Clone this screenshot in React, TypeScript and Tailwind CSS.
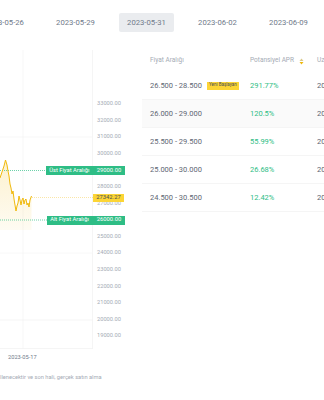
import React from "react";

const tabs = ["2023-05-26", "2023-05-29", "2023-05-31", "2023-06-02", "2023-06-09"];
const axis = [
  "33000.00", "32000.00", "31000.00", "30000.00", "29000.00", "28000.00", "27000.00",
  "26000.00", "25000.00", "24000.00", "23000.00", "22000.00", "21000.00", "20000.00", "19000.00",
];
const rows = [
  { range: "26.500 - 28.500", apr: "291.77%", badge: true },
  { range: "26.000 - 29.000", apr: "120.5%", hover: true },
  { range: "25.500 - 29.500", apr: "55.99%" },
  { range: "25.000 - 30.000", apr: "26.68%" },
  { range: "24.500 - 30.500", apr: "12.42%" },
];

const pts: [number, number][] = [
  [0, 178], [2, 172], [4, 166], [5.5, 160], [7, 165], [8, 171], [9, 176], [10, 184], [11, 188],
  [12, 194], [13, 191], [14, 199], [15, 205], [16, 211], [17, 206], [18, 203], [19, 196],
  [20, 200], [21, 205], [22, 200], [23, 198], [24, 204], [25, 200], [26, 199], [27, 205],
  [28, 203], [29, 207], [30, 200], [31.5, 196],
];

function Chart() {
  const line = pts.map((p) => p.join(",")).join(" ");
  const area = `0,230 ${line} 31.5,230`;
  return (
    <svg className="absolute inset-0" width="93" height="299" viewBox="0 50 93 299">
      <defs>
        <linearGradient id="g" x1="0" y1="0" x2="0" y2="1">
          <stop offset="0" stopColor="#f0b90b" stopOpacity="0.2" />
          <stop offset="1" stopColor="#f0b90b" stopOpacity="0.05" />
        </linearGradient>
      </defs>
      <line x1="23" y1="50" x2="23" y2="349" stroke="#f5f5f5" strokeWidth="0.8" />
      <line x1="92.5" y1="50" x2="92.5" y2="349" stroke="#f3f3f3" strokeWidth="0.8" />
      <line x1="0" y1="137" x2="93" y2="137" stroke="#f5f5f5" strokeWidth="0.8" />
      <line x1="0" y1="253" x2="93" y2="253" stroke="#f6f6f6" strokeWidth="0.8" />
      <line x1="0" y1="320" x2="93" y2="320" stroke="#f3f3f3" strokeWidth="0.8" />
      <line x1="0" y1="348.5" x2="93" y2="348.5" stroke="#f3f3f3" strokeWidth="0.8" />
      <polygon points={area} fill="url(#g)" />
      <line x1="0" y1="170.5" x2="46" y2="170.5" stroke="#2ebd85" strokeWidth="0.7" strokeDasharray="1 1" />
      <line x1="0" y1="220" x2="47" y2="220" stroke="#2ebd85" strokeWidth="0.7" strokeDasharray="1 1" />
      <line x1="32" y1="197.5" x2="93" y2="197.5" stroke="#f0b90b" strokeOpacity="0.6" strokeWidth="0.6" strokeDasharray="1 1" />
      <polyline points={line} fill="none" stroke="#f0b90b" strokeWidth="1" strokeLinejoin="round" />
    </svg>
  );
}

export default function App() {
  return (
    <div className="w-[324px] h-[400px] overflow-hidden bg-white font-['Roboto',sans-serif]">
      <div className="h-[50px] pt-[13px] flex gap-[16px] ml-[-23px]">
        {tabs.map((t) => (
          <div
            key={t}
            className={
              t === "2023-05-31"
                ? "w-[55px] h-[19px] shrink-0 flex items-center justify-center rounded-[2px] text-[7.7px] bg-[#eaecef] text-[#707a8a]"
                : "w-[55px] h-[19px] shrink-0 flex items-center justify-center rounded-[2px] text-[7.7px] text-[#707a8a]"
            }
          >
            {t}
          </div>
        ))}
      </div>
      <div className="flex">
        <div className="w-[142px] shrink-0">
          <div className="relative h-[295px] flex">
            <div className="relative w-[93px] h-[295px] shrink-0">
              <Chart />
            </div>
            <div className="flex flex-col pl-[4px] pt-[45.7px]">
              {axis.map((a) => (
                <div key={a} className="h-[16.6px] flex items-center text-[5.7px] text-[#a5abb5] leading-none">
                  {a}
                </div>
              ))}
            </div>
            <div className="absolute left-[46px] top-[116px] h-[9px] flex text-white text-[5.8px] leading-none">
              <div className="w-[46.5px] bg-[#2ebd85] flex items-center justify-center">Üst Fiyat Aralığı</div>
              <div className="w-[0.5px] bg-[#a6e6c9]" />
              <div className="w-[32px] bg-[#2ebd85] flex items-center justify-center">29000.00</div>
            </div>
            <div className="absolute left-[46.5px] top-[165.5px] h-[9px] flex text-white text-[5.8px] leading-none">
              <div className="w-[46px] bg-[#2ebd85] flex items-center justify-center">Alt Fiyat Aralığı</div>
              <div className="w-[0.5px] bg-[#a6e6c9]" />
              <div className="w-[32px] bg-[#2ebd85] flex items-center justify-center">26000.00</div>
            </div>
            <div className="absolute left-[93px] top-[143.5px] w-[31px] h-[8px] bg-[#fcd535] flex items-center justify-center text-[5.8px] text-[#474d57] leading-none">
              27342.27
            </div>
          </div>
          <div className="h-[24px] flex items-center pl-[8px] text-[5.7px] text-[#707a8a]">2023-05-17</div>
          <div className="h-[16px] flex items-center text-[5.7px] text-[#a5abb5] whitespace-nowrap">
            llenecektir ve son hali, gerçek satın alma
          </div>
        </div>
        <div className="flex-1 min-w-0 overflow-hidden">
          <div className="grid grid-cols-[100px_67px_100px] h-[22px] items-center text-[6.5px] text-[#a5abb5] whitespace-nowrap">
            <div className="pl-[8px]">Fiyat Aralığı</div>
            <div className="pl-[8px] flex items-center gap-[5px]">
              <span>Potansiyel APR</span>
              <svg width="5" height="7" viewBox="0 0 5 7">
                <path d="M2.5 0.5 L4.5 3 H0.5 Z" fill="#d9c88a" />
                <path d="M2.5 6.5 L4.5 4 H0.5 Z" fill="#f0b90b" />
              </svg>
            </div>
            <div className="pl-[8px]">Uzlaşma Tarihi</div>
          </div>
          {rows.map((r) => (
            <div
              key={r.range}
              className={
                r.hover
                  ? "grid grid-cols-[100px_67px_100px] h-[28px] items-center border-b border-[#f5f5f5] bg-[#fafafa] text-[7.5px] whitespace-nowrap"
                  : "grid grid-cols-[100px_67px_100px] h-[28px] items-center border-b border-[#f5f5f5] text-[7.5px] whitespace-nowrap"
              }
            >
              <div className="pl-[8px] flex items-center gap-[5px] text-[#5e6673]">
                <span>{r.range}</span>
                {r.badge && (
                  <span className="h-[8px] w-[32px] bg-[#fcd535] text-[#474d57] text-[4.5px] flex items-center justify-center leading-none">
                    Yeni Başlayan
                  </span>
                )}
              </div>
              <div className="pl-[8px] text-[#2ebd85]">{r.apr}</div>
              <div className="pl-[8px] text-[#5e6673]">2023-06-27 08:00</div>
            </div>
          ))}
        </div>
      </div>
    </div>
  );
}
